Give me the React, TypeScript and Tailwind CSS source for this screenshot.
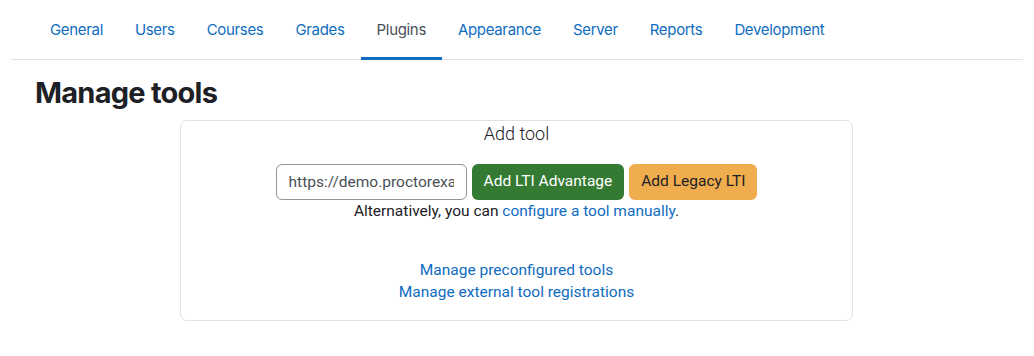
import React from "react";

const tabs = ["General", "Users", "Courses", "Grades", "Plugins", "Appearance", "Server", "Reports", "Development"];

export default function App() {
  return (
    <div className="w-[1034px] h-[356px] bg-white text-[#1d2125]" style={{ fontFamily: "Inter, 'Noto Sans', sans-serif" }}>
      <div className="mx-[11px] border-b border-[#dee2e6] h-[60px] flex pl-[23px]">
        {tabs.map((t) => (
          <div
            key={t}
            className={
              "px-4 h-[60px] flex items-center pt-[3px] text-[15px] tracking-[-0.33px] border-b-[3px] " +
              (t === "Plugins" ? "border-[#0f6cbf] text-[#495057]" : "border-transparent text-[#0f6cbf]")
            }
          >
            <span>{t}</span>
          </div>
        ))}
      </div>
      <div className="pl-[35px] pt-[15px] h-[60px]">
        <h1 className="text-[29px] leading-[36px] font-bold tracking-[-0.75px] text-[#1d2125]">Manage tools</h1>
      </div>
      <div
        className="ml-[180px] w-[673px] h-[201px] border border-[#dee2e6] rounded-[7px] flex flex-col items-center"
        style={{ fontFamily: "Roboto, 'Liberation Sans', sans-serif" }}
      >
        <div className="mt-[1px] text-[18px] leading-[24px] font-light text-[#1d2125]">Add tool</div>
        <div className="mt-[18px] flex gap-[5px]">
          <input
            readOnly
            value="https://demo.proctorexam.com"
            className="w-[191px] h-[36px] border border-[#8f959e] rounded-[6px] px-[12px] text-[15.5px] text-[#495057] outline-none bg-white"
          />
          <div className="h-[36px] px-[12px] rounded-[6px] bg-[#357a32] text-white text-[15.5px] flex items-center">
            Add LTI Advantage
          </div>
          <div className="h-[36px] px-[12px] rounded-[6px] bg-[#f0ad4e] text-[#1d2125] text-[15.5px] flex items-center">
            Add Legacy LTI
          </div>
        </div>
        <div className="mt-0 text-[15.5px] leading-[22px] text-[#1d2125]">
          Alternatively, you can <span className="text-[#0f6cbf]">configure a tool manually</span>.
        </div>
        <div className="mt-[37px] text-[15.5px] leading-[22px] text-[#0f6cbf] flex flex-col items-center">
          <span>Manage preconfigured tools</span>
          <span>Manage external tool registrations</span>
        </div>
      </div>
    </div>
  );
}
